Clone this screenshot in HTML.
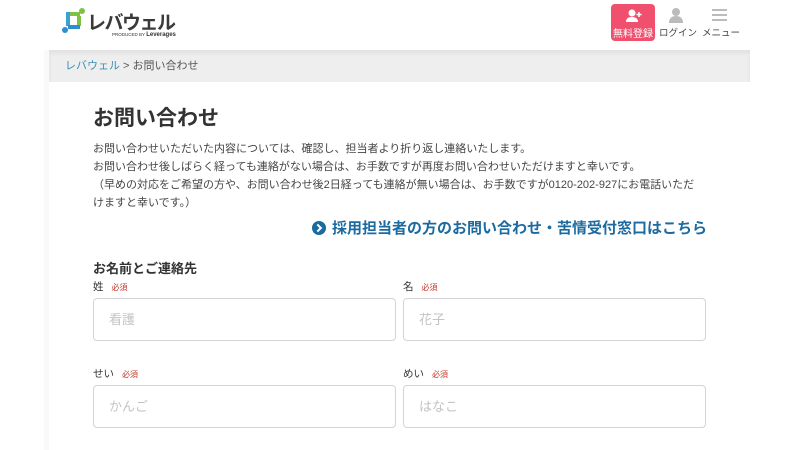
<!DOCTYPE html>
<html><head><meta charset="utf-8"><style>
*{margin:0;padding:0;box-sizing:border-box}
body{width:800px;height:450px;overflow:hidden;background:#fff;font-family:"Liberation Sans","Noto Sans CJK JP",sans-serif;color:#333;position:relative}
.strip{position:absolute;top:50px;bottom:0;left:44px;width:706px;background:#f7f9fb}
.card{position:absolute;top:0;left:49px;width:701px;height:450px;background:#fff}
.hdr{position:absolute;top:0;left:49px;width:701px;height:50px;background:#fff}
.bc{position:absolute;top:50px;left:49px;width:701px;height:32px;background:#eeeeee;font-size:11px;line-height:32px;padding-left:16px;color:#555;box-shadow:inset 0 3px 4px rgba(0,0,0,.06)}
.bc span{color:#3a8fb7}
.logo{position:absolute;left:62px;top:8px}
.logo .t{position:absolute;left:25px;top:0px;font-size:19px;font-weight:bold;color:#3a3a3a;letter-spacing:-1.5px;white-space:nowrap}
.logo .s{position:absolute;left:50px;top:24px;font-size:4.5px;color:#333;white-space:nowrap}
.reg{position:absolute;left:611px;top:4px;width:44px;height:37px;background:#f0506e;border-radius:4px;color:#fff;font-size:10px;text-align:center;padding-top:21px}
.nav{position:absolute;top:25px;font-size:9.5px;color:#444;white-space:nowrap}
h1{position:absolute;left:93px;top:102px;font-size:21px;font-weight:bold;color:#333}
.intro{position:absolute;left:93px;top:140px;width:611px;font-size:11px;line-height:18px;color:#444}
.link{position:absolute;left:312px;top:217px;font-size:15px;font-weight:bold;color:#1b6aa0;white-space:nowrap}
.link i{display:inline-block;width:14px;height:14px;border-radius:50%;background:#1b6aa0;vertical-align:-2px;margin-right:6px;position:relative}
.link i:after{content:"";position:absolute;left:3px;top:4px;width:4px;height:4px;border-top:2px solid #fff;border-right:2px solid #fff;transform:rotate(45deg)}
.sec{position:absolute;left:93px;top:258px;font-size:13px;font-weight:bold;color:#333}
.lab{position:absolute;font-size:10.5px;color:#333}
.lab em{font-style:normal;color:#c0392b;font-size:8px;margin-left:8px}
.in{position:absolute;width:303px;height:43px;border:1px solid #d4d4d4;border-radius:4px;font-size:13px;color:#c4c4c4;line-height:41px;padding-left:15px}
</style></head><body>
<div class="strip"></div><div class="card"></div><div class="hdr"></div>
<div class="logo">
<svg width="24" height="26" viewBox="0 0 24 26"><rect x="4" y="4" width="4" height="14" fill="#3aa0d8"/><rect x="8" y="4" width="10" height="4" fill="#7dc242"/><rect x="15" y="8" width="4" height="10" fill="#7dc242"/><rect x="6" y="17" width="12" height="4" fill="#2e8fd0"/><circle cx="3" cy="22" r="3" fill="#2e8fd0"/><circle cx="20" cy="3" r="3" fill="#7dc242"/></svg>
<div class="t">レバウェル</div><div class="s">PRODUCED BY <b style="font-size:6px">Leverages</b></div></div>
<div class="reg"><svg style="position:absolute;left:15px;top:5px" width="16" height="14" viewBox="0 0 16 14"><circle cx="6" cy="4" r="3.5" fill="#fff"/><path d="M0 13c0-4 3-5 6-5s6 1 6 5z" fill="#fff"/><path d="M13 3v5M10.5 5.5h5" stroke="#fff" stroke-width="1.5"/></svg>無料登録</div>
<svg style="position:absolute;left:668px;top:7px" width="16" height="16" viewBox="0 0 16 16"><circle cx="8" cy="5" r="4" fill="#bbb"/><path d="M1 16c0-5 3-7 7-7s7 2 7 7z" fill="#bbb"/></svg>
<div class="nav" style="left:659px">ログイン</div>
<svg style="position:absolute;left:712px;top:9px" width="15" height="12"><path d="M0 1h15M0 6h15M0 11h15" stroke="#bbb" stroke-width="2"/></svg>
<div class="nav" style="left:702px">メニュー</div>
<div class="bc"><span>レバウェル</span> &gt; お問い合わせ</div>
<h1>お問い合わせ</h1>
<div class="intro">お問い合わせいただいた内容については、確認し、担当者より折り返し連絡いたします。<br>お問い合わせ後しばらく経っても連絡がない場合は、お手数ですが再度お問い合わせいただけますと幸いです。<br>（早めの対応をご希望の方や、お問い合わせ後2日経っても連絡が無い場合は、お手数ですが0120-202-927にお電話いただ<br>けますと幸いです。）</div>
<div class="link"><i></i>採用担当者の方のお問い合わせ・苦情受付窓口はこちら</div>
<div class="sec">お名前とご連絡先</div>
<div class="lab" style="left:93px;top:279px">姓<em>必須</em></div>
<div class="lab" style="left:403px;top:279px">名<em>必須</em></div>
<div class="in" style="left:93px;top:298px">看護</div>
<div class="in" style="left:403px;top:298px">花子</div>
<div class="lab" style="left:93px;top:366px">せい<em>必須</em></div>
<div class="lab" style="left:403px;top:366px">めい<em>必須</em></div>
<div class="in" style="left:93px;top:385px">かんご</div>
<div class="in" style="left:403px;top:385px">はなこ</div>
</body></html>
